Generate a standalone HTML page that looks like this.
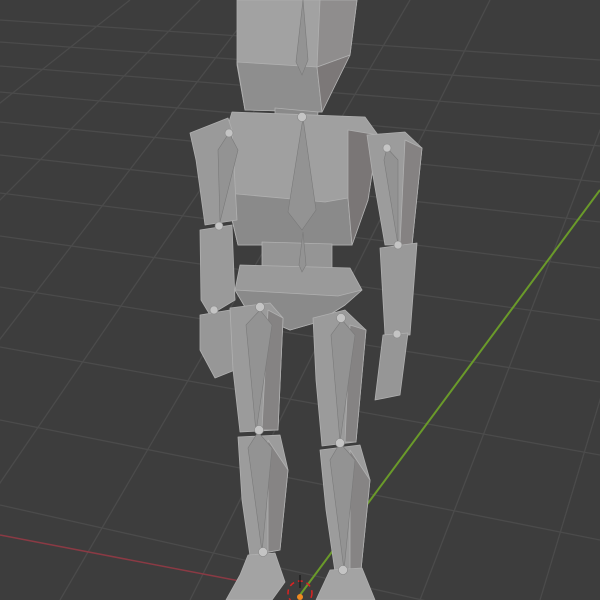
<!DOCTYPE html><html><head><style>html,body{margin:0;padding:0;background:#3d3d3d;width:600px;height:600px;overflow:hidden}svg{display:block}</style></head><body>
<svg width="600" height="600" viewBox="0 0 600 600" xmlns="http://www.w3.org/2000/svg">
<rect width="600" height="600" fill="#3d3d3d"/>
<g stroke="#4b4b4b" stroke-width="1.3" fill="none">
<line x1="0" y1="20" x2="600" y2="60"/>
<line x1="0" y1="42" x2="600" y2="86"/>
<line x1="0" y1="66" x2="600" y2="114"/>
<line x1="0" y1="92" x2="600" y2="146"/>
<line x1="0" y1="122" x2="600" y2="182"/>
<line x1="0" y1="155" x2="600" y2="222"/>
<line x1="0" y1="193" x2="600" y2="268"/>
<line x1="0" y1="236" x2="600" y2="320"/>
<line x1="0" y1="287" x2="600" y2="382"/>
<line x1="0" y1="347" x2="600" y2="455"/>
<line x1="0" y1="420" x2="600" y2="540"/>
<line x1="0" y1="505" x2="600" y2="640"/>
<line x1="-200" y1="600" x2="260" y2="0"/>
<line x1="-80" y1="600" x2="330" y2="0"/>
<line x1="60" y1="600" x2="410" y2="0"/>
<line x1="190" y1="600" x2="490" y2="0"/>
<line x1="420" y1="600" x2="650" y2="0"/>
<line x1="540" y1="600" x2="720" y2="0"/>
<line x1="-300" y1="500" x2="200" y2="0"/>
<line x1="-400" y1="420" x2="130" y2="0"/>
</g>
<line x1="0" y1="535" x2="245" y2="582" stroke="#8a3a44" stroke-width="1.5"/>
<line x1="300" y1="595" x2="600" y2="190" stroke="#6a9a2a" stroke-width="2"/>
<g stroke="#b0b0b0" stroke-width="0.8" stroke-linejoin="round">
<polygon points="237,0 357,0 350,55 322,112 245,110 237,65" fill="#a2a2a2"/>
<polygon points="237,62 317,67 322,112 245,110" fill="#8e8e8e"/>
<polygon points="317,67 350,55 322,112" fill="#7c7878"/>
<polygon points="320,0 357,0 350,55 317,67" fill="#8f8d8d"/>
<polygon points="275,108 318,112 317,125 275,123" fill="#8a8a8a"/>
<polygon points="232,112 365,117 378,135 368,200 352,245 238,245 226,195 228,125" fill="#a0a0a0"/>
<polygon points="226,193 325,202 348,198 352,245 238,245" fill="#8a8a8a"/>
<polygon points="348,130 378,135 368,200 352,245 348,198" fill="#7a7676"/>
<polygon points="190,133 228,118 232,130 237,220 205,225 196,160" fill="#9a9a9a"/>
<polygon points="200,230 232,225 235,300 210,315 201,300" fill="#9a9a9a"/>
<polygon points="200,315 230,310 235,370 215,378 200,350" fill="#979797"/>
<polygon points="367,135 405,132 422,148 412,245 385,245 372,170" fill="#9c9c9c"/>
<polygon points="405,140 422,148 412,245 400,245" fill="#858282"/>
<polygon points="380,248 417,243 410,335 385,335" fill="#999"/>
<polygon points="383,335 408,333 400,395 375,400" fill="#969696"/>
<polygon points="262,242 332,244 332,282 262,282" fill="#959595"/>
<polygon points="240,265 350,268 362,290 345,305 318,322 290,330 248,312 235,290" fill="#9a9a9a"/>
<polygon points="235,290 338,296 362,290 345,305 318,322 290,330 248,312" fill="#8a8a8a"/>
<polygon points="230,308 270,303 283,318 278,430 240,432 233,370" fill="#9b9b9b"/>
<polygon points="268,310 283,318 278,430 262,430" fill="#858383"/>
<polygon points="313,318 345,310 366,330 356,442 322,446 316,380" fill="#9b9b9b"/>
<polygon points="350,325 366,330 356,442 345,442" fill="#858383"/>
<polygon points="238,437 280,435 288,470 280,550 250,556 242,500" fill="#9c9c9c"/>
<polygon points="268,440 288,470 280,550 268,552" fill="#868484"/>
<polygon points="320,450 360,445 370,480 361,570 335,572 326,510" fill="#9c9c9c"/>
<polygon points="350,450 370,480 361,570 350,570" fill="#868484"/>
<polygon points="248,555 275,553 285,582 272,600 226,600 240,575" fill="#a3a3a3"/>
<polygon points="330,570 362,568 375,600 316,600" fill="#a3a3a3"/>
</g>
<g fill="#939393" stroke="#7a7a7a" stroke-width="0.6">
<polygon points="303,0 308,60 302,75 296,62"/>
<polygon points="303,118 316,210 302,230 288,212"/>
<polygon points="303,232 306,265 302,272 299,265"/>
<polygon points="229,133 238,150 220,222 218,150"/>
<polygon points="387,148 398,160 398,245 384,160"/>
<polygon points="260,310 272,325 256,432 246,325"/>
<polygon points="342,320 355,335 340,442 331,335"/>
<polygon points="258,432 272,448 262,552 248,448"/>
<polygon points="340,443 355,460 344,570 330,460"/>
</g>
<g fill="#c4c4c4" stroke="#888" stroke-width="0.6">
<circle cx="302" cy="117" r="4.5"/><circle cx="229" cy="133" r="4"/><circle cx="387" cy="148" r="4"/>
<circle cx="219" cy="226" r="4"/><circle cx="398" cy="245" r="4"/><circle cx="214" cy="310" r="4"/>
<circle cx="397" cy="334" r="4"/><circle cx="260" cy="307" r="4.5"/><circle cx="341" cy="318" r="4.5"/>
<circle cx="259" cy="430" r="4.5"/><circle cx="340" cy="443" r="4.5"/><circle cx="263" cy="552" r="4.5"/>
<circle cx="343" cy="570" r="4.5"/>
</g>
<circle cx="300" cy="593" r="12" fill="none" stroke="#d22" stroke-width="1.5" stroke-dasharray="5 4"/>
<line x1="300" y1="575" x2="300" y2="588" stroke="#111" stroke-width="1"/>
<circle cx="300" cy="597" r="3" fill="#f08a20"/>
</svg>
</body></html>
